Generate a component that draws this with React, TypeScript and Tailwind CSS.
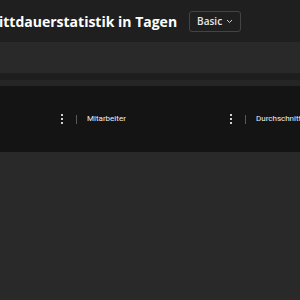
import React from "react";

function Kebab() {
  return (
    <div className="flex w-[5px] shrink-0 flex-col items-center gap-[2px]">
      <span className="block h-[2px] w-[2px] bg-[#d0d0d0]" />
      <span className="block h-[2px] w-[2px] bg-[#d0d0d0]" />
      <span className="block h-[2px] w-[2px] bg-[#d0d0d0]" />
    </div>
  );
}

function Col({ label, w }: { label: string; w: string }) {
  return (
    <>
      <Kebab />
      <span className="ml-[12px] block h-[9px] w-px shrink-0 bg-[#5a5a5a]" />
      <span
        className={`ml-[10px] shrink-0 whitespace-nowrap text-[8px] text-[#f0f0f0] ${w}`}
        style={{ fontFamily: 'Roboto, "Noto Sans", sans-serif' }}
      >
        {label}
      </span>
    </>
  );
}

export default function App() {
  return (
    <div
      className="flex h-[300px] w-[300px] flex-col overflow-hidden bg-[#292929]"
      style={{ fontFamily: '"Open Sans", "Noto Sans", sans-serif' }}
    >
      <div className="flex h-[42px] shrink-0 items-center bg-[#1f1f1f]">
        <h1 className="-ml-[1px] shrink-0 whitespace-nowrap text-[14px] font-bold text-white">ittdauerstatistik in Tagen</h1>
        <button className="ml-[12px] flex h-[21px] shrink-0 items-center gap-[4px] rounded-[3px] border border-[#444] px-[7px] text-[10px] font-semibold text-[#e8e8e8]">
          Basic
          <svg width="7" height="5" viewBox="0 0 7 5" fill="none">
            <path d="M1 1l2.5 2.5L6 1" stroke="#cfcfcf" strokeWidth="1" />
          </svg>
        </button>
      </div>
      <div className="h-[31px] shrink-0 bg-[#292929]" />
      <div className="h-[7px] shrink-0 bg-[#1e1e1e]" />
      <div className="h-[6px] shrink-0 bg-[#252525]" />
      <div className="flex h-[66px] shrink-0 items-center bg-[#141414] pl-[59px]">
        <Col label="Mitarbeiter" w="w-[141px]" />
        <Col label="Durchschnitt" w="w-[60px]" />
      </div>
    </div>
  );
}
